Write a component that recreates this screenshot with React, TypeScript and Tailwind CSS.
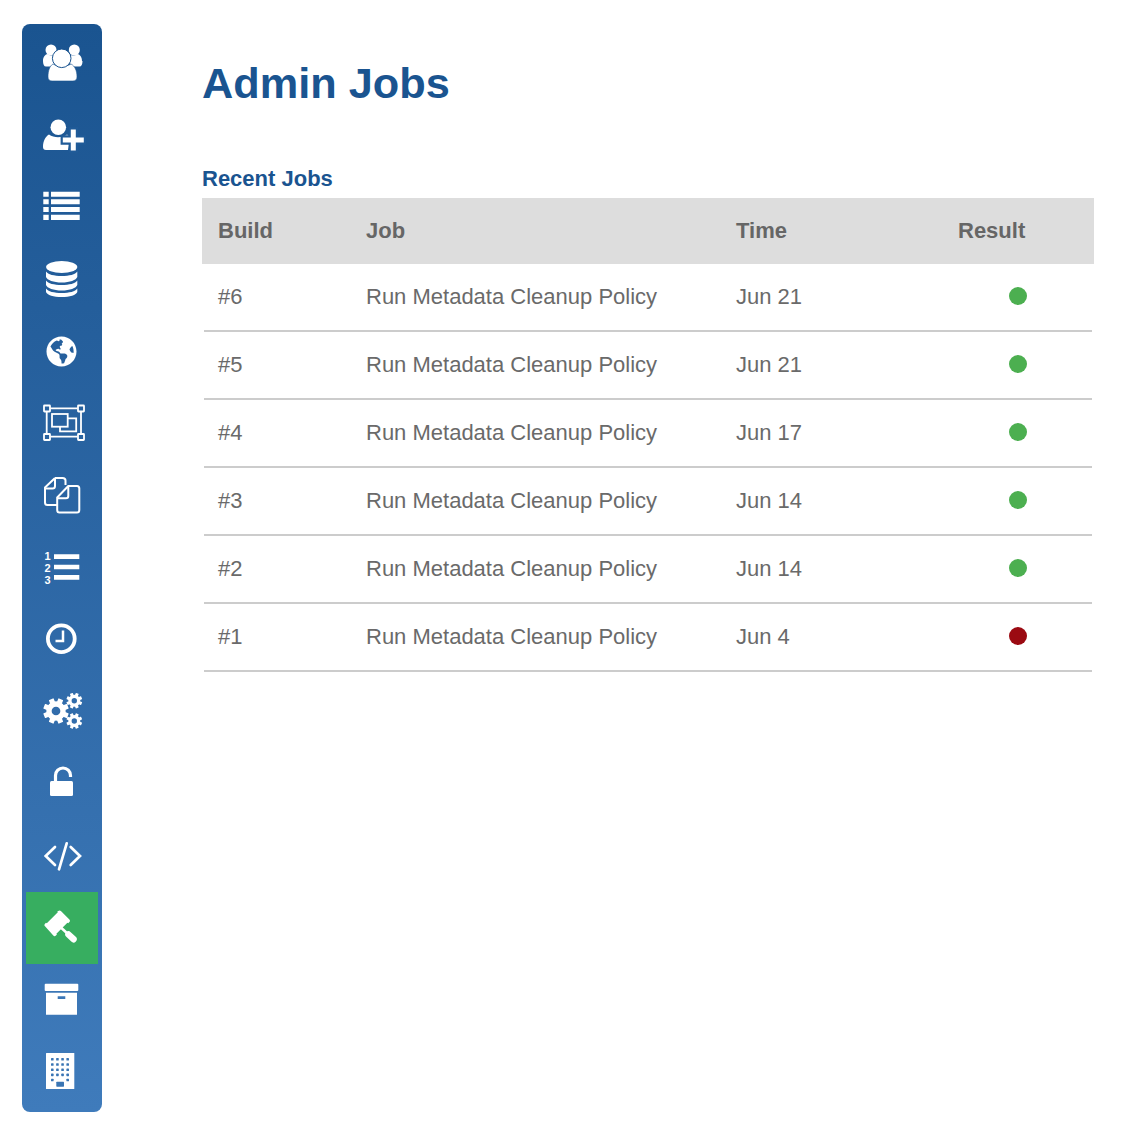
import React from "react";
import { FaGlobeAmericas } from "react-icons/fa";

const blue = "#1a5490";

const UsersIcon = () => (
  <svg viewBox="0 0 48 48" className="w-12 h-12" fill="#fff">
    <circle cx="13" cy="10" r="5.500" />
    <circle cx="36.300" cy="10" r="5.500" />
    <path d="M5 21c0-4 2-6.500 4.500-7 3 2 5.500 2 8 .5 2 1 3 2 3 4l-6 8H8c-2 0-3-2-3-5.500z" />
    <path d="M44 21c0-4-2-6.500-4.500-7-3 2-5.500 2-8 .5-2 1-3 2-3 4l6 8h7c2 0 3-2 3-5.500z" />
    <path d="M14 41c-2.500 0-4-1.500-4-4 0-6 1.500-11 5-13 5 3 13 3 18 0 4 2 6 7 6 13 0 2.500-1.500 4-4 4z" stroke={blue} strokeWidth="0.600" />
    <circle cx="23.700" cy="18.300" r="9.300" stroke={blue} strokeWidth="1" />
  </svg>
);

const UserAddIcon = () => (
  <svg viewBox="0 0 48 48" className="w-12 h-12" fill="#fff">
    <circle cx="20.300" cy="15.300" r="7.800" />
    <path d="M8 38c-2 0-3-1-3-3 0-6 2.500-10.500 6-12.500 5 3.500 13 3.500 18 0 1.500 1 2.500 2 3.500 3.500L30 38z" />
    <path d="M32.800 17.500h5v8h8v5h-8v8h-5v-8h-8v-5h8z" stroke="#205b98" strokeWidth="4.400" paintOrder="stroke" />
  </svg>
);

const ListIcon = () => (
  <svg viewBox="0 0 48 48" className="w-12 h-12" fill="#fff">
    <path d="M5.300 7.700h5.400v5H5.300zM5.300 15.300h5.400v5H5.300zM5.300 23h5.400v5H5.300zM5.300 30.700h5.400V36H5.300z" />
    <path d="M13 7.700h28.700v5H13zM13 15.300h28.700v5H13zM13 23h28.700v5H13zM13 30.700h28.700V36H13z" />
  </svg>
);

const DatabaseIcon = () => (
  <svg viewBox="0 0 48 48" className="w-12 h-12" fill="#fff">
    <ellipse cx="23.700" cy="11" rx="15.600" ry="6" />
    <path d="M8 15.500c2 3 8 4.500 15.700 4.500s13.700-1.500 15.600-4.500V21c-1 3-7.500 5.500-15.600 5.500S9 24 8 21z" />
    <path d="M8 24.500c2 3 8 4.500 15.700 4.500s13.700-1.500 15.600-4.500V29c-1 3-7.500 5.500-15.600 5.500S9 32 8 29z" />
    <path d="M8 32.500c2 3 8 4.500 15.700 4.500s13.700-1.500 15.600-4.500V36c-1 3-7.500 5-15.600 5S9 39 8 36z" />
  </svg>
);

const SelectionIcon = () => (
  <svg viewBox="0 0 48 48" className="w-12 h-12" fill="none" stroke="#fff" strokeWidth="1.800">
    <path d="M12.500 8.300h27M12.500 36.700h27M8.700 11.500v21.500M43 11.500v21.500" />
    <rect x="6" y="5.500" width="6" height="6" rx="0.500" />
    <rect x="40" y="5.500" width="6" height="6" rx="0.500" />
    <rect x="6" y="34" width="6" height="6" rx="0.500" />
    <rect x="40" y="34" width="6" height="6" rx="0.500" />
    <rect x="14" y="14" width="15.700" height="12.700" />
    <path d="M29.700 18.300h8.500v13H22v-4.600" />
  </svg>
);

const FilesIcon = () => (
  <svg viewBox="0 0 48 48" className="w-12 h-12" fill="none" stroke="#fff" strokeWidth="2" strokeLinejoin="round">
    <path d="M17 6h7.500c1.500 0 3 1 3 2.500V13M17 6L7 15.500V30.500c0 1.500 1 2.500 2.500 2.500H19" />
    <path d="M17 6v8c0 1.500-1 2.500-2.500 2.500H7" />
    <path d="M30.300 14h8.700c1.500 0 2.300 1 2.300 2.500V38c0 1.500-.8 2.500-2.300 2.500H21.500c-1.500 0-2.300-1-2.300-2.500V25.500z" />
    <path d="M30.300 14v10c0 1.500-.8 2.300-2.300 2.300h-8.500" />
  </svg>
);

const OrderedIcon = () => (
  <svg viewBox="0 0 48 48" className="w-12 h-12" fill="#fff">
    <path d="M16 10.300h25.300V15H16zM16 20.700h25.300v4.600H16zM16 31h25.300v4.700H16z" />
    <text x="9.500" y="15.500" textAnchor="middle" fontSize="11" fontWeight="700" fontFamily="'Liberation Sans', sans-serif">1</text>
    <text x="9.500" y="27.500" textAnchor="middle" fontSize="11" fontWeight="700" fontFamily="'Liberation Sans', sans-serif">2</text>
    <text x="9.500" y="39.500" textAnchor="middle" fontSize="11" fontWeight="700" fontFamily="'Liberation Sans', sans-serif">3</text>
  </svg>
);

const ClockIcon = () => (
  <svg viewBox="0 0 48 48" className="w-12 h-12" fill="none" stroke="#fff">
    <circle cx="23.300" cy="22.700" r="13.400" strokeWidth="3.800" />
    <path d="M25 14.500v10.500h-7.500" strokeWidth="2.500" />
  </svg>
);

const Gear = ({ cx, cy, r }: { cx: number; cy: number; r: number }) => (
  <g transform={`translate(${cx} ${cy})`}>
    {[0, 45, 90, 135, 180, 225, 270, 315].map((a) => (
      <rect key={a} x={-r * 0.2} y={-r} width={r * 0.4} height={r * 0.5} rx={r * 0.05} transform={`rotate(${a + 22.5})`} fill="#fff" />
    ))}
    <circle r={r * 0.55} fill="none" stroke="#fff" strokeWidth={r * 0.42} />
  </g>
);

const CogsIcon = () => (
  <svg viewBox="0 0 48 48" className="w-12 h-12">
    <Gear cx={18} cy={23} r={12.800} />
    <Gear cx={36.300} cy={12.700} r={7.900} />
    <Gear cx={36.300} cy={33} r={7.900} />
  </svg>
);

const UnlockIcon = () => (
  <svg viewBox="0 0 48 48" className="w-12 h-12" fill="#fff">
    <rect x="12" y="21" width="23" height="15" rx="1.500" />
    <path d="M17.500 21v-5.500a7.500 7.500 0 0 1 15 0v1.500" fill="none" stroke="#fff" strokeWidth="3.200" />
  </svg>
);

const CodeIcon = () => (
  <svg viewBox="0 0 48 48" className="w-12 h-12" fill="none" stroke="#fff" strokeWidth="2.700" strokeLinecap="round">
    <path d="M17 15l-9.300 9 9.300 9M32.700 15l9.300 9-9.300 9M28.700 11.300L21 37.300" />
  </svg>
);

const GavelIcon = () => (
  <svg viewBox="0 0 48 48" className="w-12 h-12" fill="#fff">
    <path d="M20.300 7c.8-.8 1.800-.8 2.600 0l8.500 8.500c.8.800.8 1.800 0 2.600l-1.200 1.200-.8-.5-11 11 .5.800-1 1c-.8.800-1.800.8-2.600 0L7 22.300c-.8-.8-.8-1.800 0-2.600l1-1 .8.500 11-11-.5-.8z" />
    <path d="M21 21.800l10 9.200" stroke="#fff" strokeWidth="2.600" fill="none" />
    <path d="M30.500 30.500l5 4.700" stroke="#fff" strokeWidth="6.500" strokeLinecap="round" fill="none" />
  </svg>
);

const ArchiveIcon = () => (
  <svg viewBox="0 0 48 48" className="w-12 h-12" fill="#fff">
    <rect x="6.700" y="7.700" width="33.600" height="7.300" rx="1" />
    <path d="M8 16.700h31v22H8zM19.700 20.300v2.700h7.600v-2.700z" fillRule="evenodd" />
  </svg>
);

const buildingDots = [0, 1, 2, 3].flatMap((row) =>
  [0, 1, 2, 3].map((col) => ({ x: 13 + col * 5.130, y: 10 + row * 5.200 })),
);

const BuildingIcon = () => (
  <svg viewBox="0 0 48 48" className="w-12 h-12">
    <rect x="8" y="5" width="28.300" height="36" rx="0.500" fill="#fff" />
    {buildingDots.map((d) => (
      <rect key={`${d.x}-${d.y}`} x={d.x} y={d.y} width="2.600" height="2.600" rx="0.600" fill="#3a75b4" />
    ))}
    <rect x="13" y="30.700" width="2.600" height="2.600" rx="0.600" fill="#3a75b4" />
    <rect x="28.400" y="30.700" width="2.600" height="2.600" rx="0.600" fill="#3a75b4" />
    <rect x="18.300" y="33.700" width="7.700" height="5" rx="0.600" fill="#3a75b4" />
  </svg>
);

const sideItems: { key: string; icon: React.ReactNode; active?: boolean }[] = [
  { key: "users", icon: <UsersIcon /> },
  { key: "add", icon: <UserAddIcon /> },
  { key: "list", icon: <ListIcon /> },
  { key: "db", icon: <DatabaseIcon /> },
  { key: "globe", icon: <FaGlobeAmericas className="text-white w-[31px] h-[31px] -mt-[1px] -ml-[1px]" /> },
  { key: "selection", icon: <SelectionIcon /> },
  { key: "files", icon: <FilesIcon /> },
  { key: "ordered", icon: <OrderedIcon /> },
  { key: "clock", icon: <ClockIcon /> },
  { key: "cogs", icon: <CogsIcon /> },
  { key: "unlock", icon: <UnlockIcon /> },
  { key: "code", icon: <CodeIcon /> },
  { key: "gavel", icon: <GavelIcon />, active: true },
  { key: "archive", icon: <ArchiveIcon /> },
  { key: "building", icon: <BuildingIcon /> },
];

const jobs = [
  { build: "#6", time: "Jun 21", ok: true },
  { build: "#5", time: "Jun 21", ok: true },
  { build: "#4", time: "Jun 17", ok: true },
  { build: "#3", time: "Jun 14", ok: true },
  { build: "#2", time: "Jun 14", ok: true },
  { build: "#1", time: "Jun 4", ok: false },
];

export default function App() {
  return (
    <div className="flex min-h-[1138px] bg-white font-['Liberation_Sans',Arial,sans-serif]">
      {/* Sidebar */}
      <nav className="ml-[22px] mt-6 mb-[26px] w-20 shrink-0 rounded-lg bg-gradient-to-b from-[#1a5490] to-[#3f7bbb] py-1 px-1 flex flex-col">
        {sideItems.map((item) => (
          <div
            key={item.key}
            className={
              item.active
                ? "h-[72px] flex items-center justify-center bg-[#37ae60]"
                : "h-[72px] flex items-center justify-center"
            }
          >
            {item.icon}
          </div>
        ))}
      </nav>

      {/* Main */}
      <main className="ml-[100px] w-[892px] flex flex-col">
        <h1 className="mt-[57px] text-[43.300px] leading-[52px] font-bold text-[#1a5490]">Admin Jobs</h1>
        <h2 className="mt-[57px] text-[22px] leading-[26px] font-bold text-[#1a5490]">Recent Jobs</h2>

        <div className="mt-[6px] h-[66px] pb-[2px] bg-[#dddddd] grid grid-cols-[148px_370px_222px_1fr] items-center text-[22px] font-bold text-[#666666]">
          <span className="pl-4">Build</span>
          <span className="pl-4">Job</span>
          <span className="pl-4">Time</span>
          <span className="pl-4">Result</span>
        </div>

        {jobs.map((job) => (
          <div
            key={job.build}
            className="mx-[2px] h-[68px] pb-[2px] border-b-2 border-[#cccccc] grid grid-cols-[146px_370px_222px_1fr] items-center text-[22px] text-[#6a6a6a]"
          >
            <span className="pl-[14px]">{job.build}</span>
            <span className="pl-4">Run Metadata Cleanup Policy</span>
            <span className="pl-4">{job.time}</span>
            <span className="pl-[67px]">
              <div className={job.ok ? "w-[18px] h-[18px] rounded-full bg-[#4caf50]" : "w-[18px] h-[18px] rounded-full bg-[#9b0a12]"} />
            </span>
          </div>
        ))}
      </main>
    </div>
  );
}
